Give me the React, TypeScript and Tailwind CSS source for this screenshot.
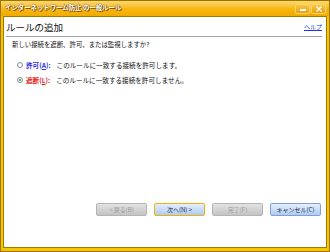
const JP: React.CSSProperties = {
  fontFamily: "'Noto Sans CJK JP', 'Noto Sans', sans-serif",
};

function Radio({ checked }: { checked?: boolean }) {
  return (
    <span className="flex-shrink-0 w-[6px] h-[6px] rounded-full border border-[#7a8a99] bg-white flex items-center justify-center">
      {checked && <span className="w-[2px] h-[2px] rounded-full bg-[#21a121]" />}
    </span>
  );
}

function WizardButton({ label, disabled, focused }: { label: string; disabled?: boolean; focused?: boolean }) {
  const base = "w-[51px] h-[13px] rounded-[2px] flex items-center justify-center text-[6px] leading-none";
  if (disabled) {
    return (
      <div className={`${base} border border-[#b4b4b4] bg-gradient-to-b from-[#e2e2e2] to-[#c4c4c4] text-[#9a9a9a]`} style={JP}>
        {label}
      </div>
    );
  }
  return (
    <div
      className={`${base} border ${focused ? "border-[#f0b400]" : "border-[#7f9fd6]"} bg-gradient-to-b from-[#e4effd] to-[#aecbf2] text-[#1e2a44]`}
      style={JP}
    >
      {label}
    </div>
  );
}

export default function App() {
  return (
    <div className="w-[330px] h-[252px] flex flex-col border border-[#9c7400] bg-[#f6c400] px-[2px] pb-[3px]">
      {/* Title bar */}
      <div className="h-[15px] -mx-[2px] flex items-center justify-between bg-gradient-to-b from-[#fcd86c] via-[#f7b912] to-[#f2aa00] pl-[4px] pr-[3px]">
        <span
          className="text-[6.4px] leading-none font-bold text-white [text-shadow:1px_1px_0_#8a5200,0_0_1px_#6a3c00,0_0_1px_#6a3c00]"
          style={JP}
        >
          インターネットワーム防止 の一般ルール
        </span>
        <div className="flex gap-[1px]">
          <div className="w-[15px] h-[10px] rounded-[2px] border border-[#fbd97a] bg-gradient-to-b from-[#f9c440] to-[#eea000] flex items-center justify-center">
            <span className="w-[6px] h-[2px] bg-white mt-[2px]" />
          </div>
          <div className="w-[15px] h-[10px] rounded-[2px] border border-[#fbd97a] bg-gradient-to-b from-[#f9c440] to-[#eea000] flex items-center justify-center">
            <svg width="6" height="6" viewBox="0 0 6 6">
              <path d="M0.5 0.5 L5.5 5.5 M5.5 0.5 L0.5 5.5" stroke="white" strokeWidth="1.4" />
            </svg>
          </div>
        </div>
      </div>

      {/* Content */}
      <div className="flex-1 flex flex-col bg-white border border-[#a27a00] px-[2px]" style={JP}>
        <div className="h-[19px] flex items-end justify-between pr-[2px] pb-[3px]">
          <span className="text-[9.5px] leading-none text-[#111] pb-[1px]">ルールの追加</span>
          <span className="text-[6px] leading-none text-[#2233dd] underline mb-[3px]">ヘルプ</span>
        </div>
        <div className="h-px bg-[#a6a6a6] mr-[2px]" />

        <p className="mt-[4px] pl-[6px] text-[6.4px] leading-[8px] text-[#111]">
          新しい接続を遮断、許可、または監視しますか?
        </p>

        <div className="mt-[12px] pl-[11px] flex items-center gap-[3px] h-[8px] text-[6.6px] leading-none">
          <Radio />
          <span className="font-bold text-[#2a2ae0]">
            許可(<span className="underline">A</span>):
          </span>
          <span className="ml-[3px] text-[#111]">このルールに一致する接続を許可します。</span>
        </div>
        <div className="mt-[7px] pl-[11px] flex items-center gap-[3px] h-[8px] text-[6.6px] leading-none">
          <Radio checked />
          <span className="font-bold text-[#e01818]">
            遮断(<span className="underline">L</span>):
          </span>
          <span className="ml-[3px] text-[#111]">このルールに一致する接続を許可しません。</span>
        </div>

        <div className="flex-1" />

        <div className="flex justify-end gap-[7px] pr-[3px] pb-[31px]">
          <WizardButton label="< 戻る(B)" disabled />
          <WizardButton label="次へ(N) >" focused />
          <WizardButton label="完了(F)" disabled />
          <WizardButton label="キャンセル(C)" />
        </div>
      </div>
    </div>
  );
}
